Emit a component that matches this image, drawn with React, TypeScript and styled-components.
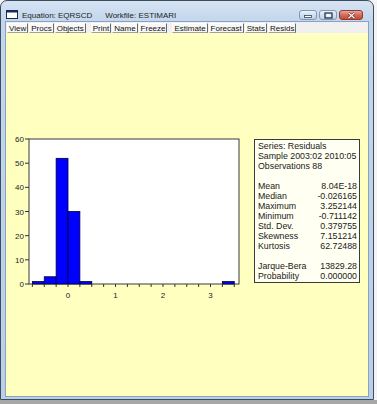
import styled, { createGlobalStyle } from "styled-components";

const GlobalStyle = createGlobalStyle`
  html, body {
    margin: 0;
    padding: 0;
    background: #f3f3f3;
  }
  body {
    font-family: "Liberation Sans", Arial, sans-serif;
  }
`;

const header = ["Series: Residuals", "Sample 2003:02 2010:05", "Observations 88"];

const stats = [
  ["Mean", "8.04E-18"],
  ["Median", "-0.026165"],
  ["Maximum", "3.252144"],
  ["Minimum", "-0.711142"],
  ["Std. Dev.", "0.379755"],
  ["Skewness", "7.151214"],
  ["Kurtosis", "62.72488"],
];

const tests = [
  ["Jarque-Bera", "13829.28"],
  ["Probability", "0.000000"],
];

const toolGroups = [
  ["View", "Procs", "Objects"],
  ["Print", "Name", "Freeze"],
  ["Estimate", "Forecast", "Stats", "Resids"],
];

// histogram bins: [from, to, count]
const bins: [number, number, number][] = [
  [-0.75, -0.5, 1],
  [-0.5, -0.25, 3],
  [-0.25, 0, 52],
  [0, 0.25, 30],
  [0.25, 0.5, 1],
  [3.25, 3.5, 1],
];

const PLOT = { left: 23, top: 9, width: 210, height: 145 };
const xOf = (v: number) => 62 + 47.5 * v;
const yOf = (c: number) => PLOT.top + PLOT.height - (c * PLOT.height) / 60;

function Histogram() {
  const ticks: number[] = [];
  for (let k = 0; k <= 17; k++) ticks.push(-0.75 + k * 0.25);

  return (
    <svg width="240" height="172" viewBox="0 0 240 172">
      <rect
        x={PLOT.left}
        y={PLOT.top}
        width={PLOT.width}
        height={PLOT.height}
        fill="#ffffff"
        stroke="#3a3a3a"
        strokeWidth="1"
      />
      {bins.map(([a, b, c]) => (
        <rect
          key={a}
          x={xOf(a)}
          y={yOf(c)}
          width={xOf(b) - xOf(a)}
          height={yOf(0) - yOf(c)}
          fill="#0000ff"
          stroke="#000033"
          strokeWidth="0.8"
        />
      ))}
      {[0, 10, 20, 30, 40, 50, 60].map((c) => (
        <g key={c}>
          <line x1="19" x2={PLOT.left} y1={yOf(c)} y2={yOf(c)} stroke="#333" strokeWidth="1" />
          <text
            x="18"
            y={yOf(c) + 3}
            textAnchor="end"
            fontSize="8"
            fontFamily="Liberation Sans, Arial, sans-serif"
            fill="#222"
          >
            {c}
          </text>
        </g>
      ))}
      {ticks.map((v) => (
        <line key={v} x1={xOf(v)} x2={xOf(v)} y1={yOf(0)} y2={yOf(0) + 3} stroke="#333" strokeWidth="1" />
      ))}
      {[0, 1, 2, 3].map((v) => (
        <text
          key={v}
          x={xOf(v)}
          y="168"
          textAnchor="middle"
          fontSize="8"
          fontFamily="Liberation Sans, Arial, sans-serif"
          fill="#222"
        >
          {v}
        </text>
      ))}
    </svg>
  );
}

function App() {
  return (
    <>
      <GlobalStyle />
      <Page>
        <Window>
          <TitleBar>
            <TitleIcon width="12" height="9" viewBox="0 0 12 9">
              <rect x="0.5" y="0.5" width="11" height="8" fill="#ffffff" stroke="#1b2b55" />
              <rect x="0.5" y="0.5" width="11" height="2" fill="#1b2b55" />
            </TitleIcon>
            <Title>
              Equation: EQRSCD<TitleGap>Workfile: ESTIMARI</TitleGap>
            </Title>
            <Controls>
              <CaptionButton>
                <svg width="8" height="6" viewBox="0 0 8 6">
                  <rect x="0.5" y="3.5" width="7" height="2" fill="#fff" stroke="#34455e" strokeWidth="0.8" />
                </svg>
              </CaptionButton>
              <CaptionButton>
                <svg width="9" height="7" viewBox="0 0 9 7">
                  <rect x="1" y="1" width="7" height="5" fill="none" stroke="#34455e" strokeWidth="1.4" />
                  <rect x="2.5" y="2.5" width="4" height="2" fill="#fff" />
                </svg>
              </CaptionButton>
              <CaptionButton $close>
                <svg width="9" height="7" viewBox="0 0 9 7">
                  <path d="M1.5 0.8 L7.5 6.2 M7.5 0.8 L1.5 6.2" stroke="#6b1c12" strokeWidth="2.4" />
                  <path d="M1.5 0.8 L7.5 6.2 M7.5 0.8 L1.5 6.2" stroke="#fff" strokeWidth="1.3" />
                </svg>
              </CaptionButton>
            </Controls>
          </TitleBar>
          <Client>
            <Toolbar>
              {toolGroups.map((group, i) => (
                <ToolGroup key={i}>
                  {group.map((label) => (
                    <ToolButton key={label}>{label}</ToolButton>
                  ))}
                </ToolGroup>
              ))}
            </Toolbar>
            <Content>
              <Histogram />
              <StatsBox>
                {header.map((line) => (
                  <StatLine key={line}>{line}</StatLine>
                ))}
                <Blank />
                {stats.map(([k, v]) => (
                  <StatLine key={k}>
                    <span>{k}</span>
                    <span>{v}</span>
                  </StatLine>
                ))}
                <Blank />
                {tests.map(([k, v]) => (
                  <StatLine key={k}>
                    <span>{k}</span>
                    <span>{v}</span>
                  </StatLine>
                ))}
              </StatsBox>
            </Content>
          </Client>
        </Window>
        <BottomStrip />
      </Page>
    </>
  );
}

export default App;

const Page = styled.div`
  width: 377px;
  height: 404px;
  display: flex;
  flex-direction: column;
  overflow: hidden;
`;

const Window = styled.div`
  width: 374px;
  height: 400px;
  box-sizing: border-box;
  border: 1px solid #3e4c60;
  border-radius: 7px 7px 0 0;
  background: linear-gradient(to bottom, #d6e3f3 0px, #c3d6ec 20px, #b9cfe8 100%);
  display: flex;
  flex-direction: column;
  padding: 0 4px 2px 4px;
`;

const TitleBar = styled.div`
  height: 20px;
  display: flex;
  align-items: center;
  padding-top: 6px;
  box-sizing: border-box;
`;

const TitleIcon = styled.svg`
  margin-left: 1px;
  margin-right: 4px;
  flex-shrink: 0;
`;

const Title = styled.div`
  font-size: 8px;
  color: #1c1c1c;
  white-space: nowrap;
  padding-top: 2px;
  flex: 1;
`;

const TitleGap = styled.span`
  margin-left: 13px;
`;

const Controls = styled.div`
  display: flex;
  gap: 2px;
  margin-right: 6px;
  margin-top: 2px;
`;

const CaptionButton = styled.div<{ $close?: boolean }>`
  width: ${(p) => (p.$close ? "24px" : "18px")};
  height: 10px;
  box-sizing: border-box;
  border: 1px solid ${(p) => (p.$close ? "#8c3b30" : "#8397b3")};
  border-radius: 3px;
  background: ${(p) =>
    p.$close
      ? "linear-gradient(to bottom, #e9a99c, #d36b5a 50%, #c44a36)"
      : "linear-gradient(to bottom, #eef3fa, #d2dfef 50%, #c0d2e8)"};
  display: flex;
  align-items: center;
  justify-content: center;
`;

const Client = styled.div`
  flex: 1;
  display: flex;
  flex-direction: column;
  border: 1px solid #8aa2c2;
  background: #ffffc0;
`;

const Toolbar = styled.div`
  height: 11px;
  display: flex;
  align-items: flex-end;
  background: #f0f0f0;
  padding-left: 1px;
`;

const ToolGroup = styled.div`
  display: flex;
  gap: 1px;
  margin-right: 5px;
`;

const ToolButton = styled.div`
  height: 10px;
  box-sizing: border-box;
  padding: 0 1px;
  font-size: 8px;
  line-height: 9px;
  color: #111;
  background: #f8f8f8;
  border-left: 1px solid #ffffff;
  border-top: 1px solid #ffffff;
  border-right: 1px solid #6a6a6a;
  border-bottom: 1px solid #a0a0a0;
  white-space: nowrap;
`;

const Content = styled.div`
  flex: 1;
  display: flex;
  align-items: flex-start;
  padding-top: 97px;
`;

const StatsBox = styled.div`
  margin-top: 9px;
  margin-left: 8px;
  width: 106px;
  height: 144px;
  box-sizing: border-box;
  border: 1px solid #3a3a3a;
  background: #fffff2;
  padding: 1px 2px 0 3px;
  font-size: 8.8px;
  line-height: 10px;
  color: #1a1a1a;
`;

const StatLine = styled.div`
  height: 10px;
  display: flex;
  justify-content: space-between;
  white-space: nowrap;
`;

const Blank = styled.div`
  height: 10px;
`;

const BottomStrip = styled.div`
  height: 4px;
  background: #a7a7a7;
`;
